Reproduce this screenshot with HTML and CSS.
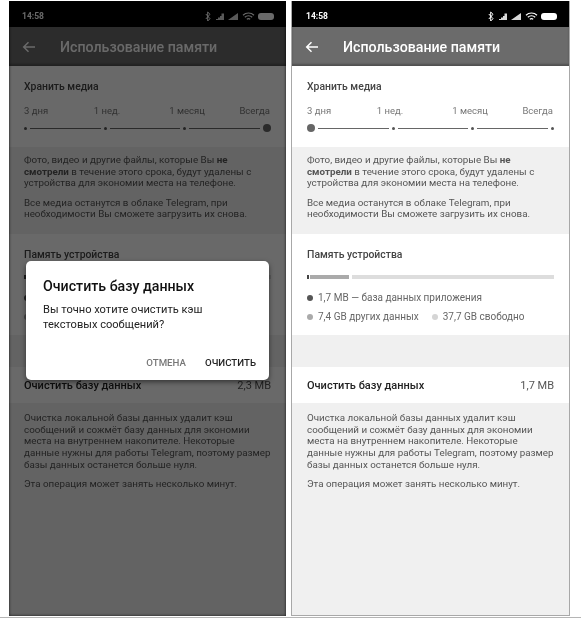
FILE: index.html
```html
<!DOCTYPE html>
<html lang="ru">
<head>
    <meta charset="UTF-8">
    <meta name="viewport" content="width=device-width, initial-scale=1.0">
    <title>Использование памяти</title>
    <link rel="stylesheet" href="styles.css">
</head>
<body>
    <div class="screens">
        <!-- левый экран: диалог поверх настроек -->
        <div class="phone phone-dim">
            <div class="status-bar">
                <span class="time">14:58</span>
                <svg class="status-icons" width="69" height="11" viewBox="0 0 69 11">
                    <path d="M.8 3l4.200 4.700L2.700 10V1l2.300 2.300L.8 8" fill="none" stroke="#fff" stroke-width="1"/>
                    <path d="M11 9V8h2V6.500h2V5h1.500V2.500H19V9z" fill="#fff" opacity=".85"/>
                    <path d="M23 9L33 2V9z" fill="#fff" opacity=".85"/>
                    <path d="M38 4.200a8 8 0 0 1 11 0M39.800 6.200a5.500 5.500 0 0 1 7.400 0M41.800 8.200a3 3 0 0 1 3.400 0" fill="none" stroke="#fff" stroke-width="1.200"/>
                    <rect x="53" y="2" width="16" height="7" rx="3" fill="#fff"/>
                </svg>
            </div>
            <div class="app-bar">
                <svg class="back" width="14" height="12" viewBox="0 0 14 12"><path d="M13 6H2M6.500 1.200L1.700 6l4.800 4.800" fill="none" stroke="currentColor" stroke-width="1.500"/></svg>
                <span class="app-title">Использование памяти</span>
            </div>
            <div class="section section-media">
                <div class="section-title">Хранить медиа</div>
                <div class="slider-labels">
                    <span>3 дня</span><span>1 нед.</span><span>1 месяц</span><span>Всегда</span>
                </div>
                <div class="slider">
                    <i class="tick"></i><b></b><i class="tick"></i><b></b><i class="tick"></i><b></b><i class="knob"></i>
                </div>
            </div>
            <div class="info info-media">
                <p>Фото, видео и другие файлы, которые Вы <strong>не смотрели</strong> в течение этого срока, будут удалены с устройства для экономии места на телефоне.</p>
                <p>Все медиа останутся в облаке Telegram, при необходимости Вы сможете загрузить их снова.</p>
            </div>
            <div class="section section-storage">
                <div class="section-title">Память устройства</div>
                <div class="usage-bar"><i class="usage-app"></i><i class="usage-other"></i><i class="usage-free"></i></div>
                <div class="legend"><span class="legend-item"><i class="dot dot-app"></i>1,7 MB — база данных приложения</span></div>
                <div class="legend"><span class="legend-item"><i class="dot dot-other"></i>7,4 GB других данных</span><span class="legend-item"><i class="dot dot-free"></i>37,7 GB свободно</span></div>
            </div>
            <div class="spacer"></div>
            <div class="section clear-row">
                <span class="clear-label">Очистить базу данных</span>
                <span class="clear-size">2,3 MB</span>
            </div>
            <div class="info info-clear">
                <p>Очистка локальной базы данных удалит кэш сообщений и сожмёт базу данных для экономии места на внутреннем накопителе. Некоторые данные нужны для работы Telegram, поэтому размер базы данных останется больше нуля.</p>
                <p>Эта операция может занять несколько минут.</p>
            </div>
            <div class="scrim"></div>
            <div class="dialog">
                <div class="dialog-title">Очистить базу данных</div>
                <div class="dialog-text">Вы точно хотите очистить кэш текстовых сообщений?</div>
                <div class="dialog-actions">
                    <span class="action-cancel">ОТМЕНА</span>
                    <span>ОЧИСТИТЬ</span>
                </div>
            </div>
        </div>

        <!-- правый экран -->
        <div class="phone phone-light">
            <div class="status-bar">
                <span class="time">14:58</span>
                <svg class="status-icons" width="69" height="11" viewBox="0 0 69 11">
                    <path d="M.8 3l4.200 4.700L2.700 10V1l2.300 2.300L.8 8" fill="none" stroke="#fff" stroke-width="1"/>
                    <path d="M11 9V8h2V6.500h2V5h1.500V2.500H19V9z" fill="#fff" opacity=".85"/>
                    <path d="M23 9L33 2V9z" fill="#fff" opacity=".85"/>
                    <path d="M38 4.200a8 8 0 0 1 11 0M39.800 6.200a5.500 5.500 0 0 1 7.400 0M41.800 8.200a3 3 0 0 1 3.400 0" fill="none" stroke="#fff" stroke-width="1.200"/>
                    <rect x="53" y="2" width="16" height="7" rx="3" fill="#fff"/>
                </svg>
            </div>
            <div class="app-bar">
                <svg class="back" width="14" height="12" viewBox="0 0 14 12"><path d="M13 6H2M6.500 1.200L1.700 6l4.800 4.800" fill="none" stroke="currentColor" stroke-width="1.500"/></svg>
                <span class="app-title">Использование памяти</span>
            </div>
            <div class="section section-media">
                <div class="section-title">Хранить медиа</div>
                <div class="slider-labels">
                    <span>3 дня</span><span>1 нед.</span><span>1 месяц</span><span>Всегда</span>
                </div>
                <div class="slider">
                    <i class="knob"></i><b></b><i class="tick"></i><b></b><i class="tick"></i><b></b><i class="tick"></i>
                </div>
            </div>
            <div class="info info-media">
                <p>Фото, видео и другие файлы, которые Вы <strong>не смотрели</strong> в течение этого срока, будут удалены с устройства для экономии места на телефоне.</p>
                <p>Все медиа останутся в облаке Telegram, при необходимости Вы сможете загрузить их снова.</p>
            </div>
            <div class="section section-storage">
                <div class="section-title">Память устройства</div>
                <div class="usage-bar"><i class="usage-app"></i><i class="usage-other"></i><i class="usage-free"></i></div>
                <div class="legend"><span class="legend-item"><i class="dot dot-app"></i>1,7 MB — база данных приложения</span></div>
                <div class="legend"><span class="legend-item"><i class="dot dot-other"></i>7,4 GB других данных</span><span class="legend-item"><i class="dot dot-free"></i>37,7 GB свободно</span></div>
            </div>
            <div class="spacer"></div>
            <div class="section clear-row">
                <span class="clear-label">Очистить базу данных</span>
                <span class="clear-size">1,7 MB</span>
            </div>
            <div class="info info-clear">
                <p>Очистка локальной базы данных удалит кэш сообщений и сожмёт базу данных для экономии места на внутреннем накопителе. Некоторые данные нужны для работы Telegram, поэтому размер базы данных останется больше нуля.</p>
                <p>Эта операция может занять несколько минут.</p>
            </div>
        </div>
    </div>
    <div class="page-line"></div>
</body>
</html>
```

FILE: styles.css
```css
* {
    margin: 0;
    padding: 0;
    box-sizing: border-box;
    font-family: Roboto, 'Liberation Sans', sans-serif;
}

body {
    background: #fff;
    width: 581px;
    height: 619px;
    overflow: hidden;
}

.screens {
    display: flex;
    gap: 5px;
    height: 617px;
    padding: 1px 0 1px 9px;
    filter: blur(0.35px);
}

.phone {
    position: relative;
    width: 277px;
    height: 615px;
    background: #f0f0f0;
    display: flex;
    flex-direction: column;
    overflow: hidden;
}

.phone-light {
    width: 279px;
    border-left: 1px solid #a8a8a8;
    border-right: 1px solid #a8a8a8;
    border-bottom: 1px solid #a8a8a8;
}

.page-line {
    height: 1px;
    background: #b5b5b5;
}

.status-bar {
    height: 26px;
    flex-shrink: 0;
    background: #000;
    display: flex;
    align-items: center;
    justify-content: space-between;
    padding: 4px 12px 0 13px;
    color: #fff;
}

.phone-light .status-bar {
    padding-left: 14px;
}

.time {
    font-size: 8.500px;
    font-weight: 700;
}

.app-bar {
    height: 39px;
    flex-shrink: 0;
    background: #6b6b6b;
    color: #fff;
    display: flex;
    align-items: center;
    padding-left: 13px;
    box-shadow: inset 0 -2px 2px rgba(0, 0, 0, 0.25);
}

.back {
    margin-right: 24px;
}

.app-title {
    font-size: 14.200px;
    font-weight: 500;
}

.section {
    background: #fff;
    padding: 0 15px;
}

.section-title {
    font-size: 10.400px;
    font-weight: 500;
    color: #444;
}

.section-media {
    height: 81px;
    padding-top: 14px;
}

.slider-labels {
    display: grid;
    grid-template-columns: 43px 80px 80px 43px;
    margin-top: 12px;
    font-size: 9.500px;
    color: #777;
}

.slider-labels span {
    text-align: center;
    white-space: nowrap;
}

.slider-labels span:first-child {
    text-align: left;
}

.slider-labels span:last-child {
    text-align: right;
}

.slider {
    display: flex;
    align-items: center;
    gap: 3px;
    height: 10px;
    margin-top: 7px;
}

.slider b {
    flex: 1;
    height: 1px;
    background: #666;
}

.tick {
    width: 3px;
    height: 3px;
    border-radius: 50%;
    background: #555;
}

.knob {
    width: 8px;
    height: 8px;
    border-radius: 50%;
    background: #666;
}

.info {
    padding: 0 15px;
    font-size: 9.800px;
    line-height: 11.700px;
    color: #555;
}

.info p + p {
    margin-top: 7.500px;
}

.info strong {
    font-weight: 700;
}

.info-media {
    height: 87px;
    padding-top: 7px;
}

.section-storage {
    height: 101px;
    padding-top: 14px;
}

.usage-bar {
    display: flex;
    gap: 1px;
    height: 4px;
    margin-top: 14px;
}

.usage-bar i {
    display: block;
    height: 4px;
}

.usage-app {
    width: 2px;
    background: #444;
}

.usage-other {
    width: 39px;
    margin-right: 2px;
    background: #aaa;
}

.usage-free {
    flex: 1;
    background: #ddd;
}

.legend {
    display: flex;
    gap: 13px;
    margin-top: 7px;
    font-size: 10px;
    line-height: 12px;
    color: #666;
}

.usage-bar + .legend {
    margin-top: 13px;
}

.legend-item {
    display: flex;
    align-items: center;
    white-space: nowrap;
}

.dot {
    width: 6px;
    height: 6px;
    border-radius: 50%;
    margin-right: 5px;
}

.dot-app {
    background: #555;
}

.dot-other {
    background: #aaa;
}

.dot-free {
    background: #d5d5d5;
}

.spacer {
    height: 32px;
    flex-shrink: 0;
}

.clear-row {
    height: 36px;
    flex-shrink: 0;
    display: flex;
    align-items: center;
    justify-content: space-between;
}

.clear-label {
    font-size: 11px;
    font-weight: 500;
    color: #222;
}

.clear-size {
    font-size: 11px;
    color: #555;
}

.info-clear {
    padding-top: 9px;
}

.scrim {
    position: absolute;
    inset: 0;
    background: rgba(0, 0, 0, 0.59);
    box-shadow: inset 0 0 3px rgba(0, 0, 0, 0.8);
}

.dialog {
    position: absolute;
    left: 17px;
    top: 260px;
    width: 243px;
    height: 119px;
    background: #fff;
    border-radius: 5px;
    padding: 17px 13px 0 17px;
    box-shadow: 0 2px 5px rgba(0, 0, 0, 0.5);
}

.dialog-title {
    font-size: 14.200px;
    font-weight: 500;
    color: #111;
}

.dialog-text {
    margin-top: 8px;
    font-size: 11.100px;
    line-height: 15px;
    color: #222;
    width: 180px;
}

.dialog-actions {
    display: flex;
    justify-content: flex-end;
    gap: 19px;
    margin-top: 25px;
    font-size: 9.700px;
    font-weight: 500;
    color: #222;
}

.action-cancel {
    color: #777;
}
```
